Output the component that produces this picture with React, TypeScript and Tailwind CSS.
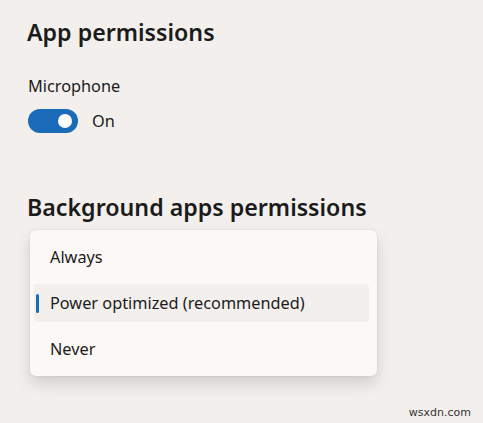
import React from "react";

export default function App() {
  return (
    <div
      className="relative w-[483px] h-[423px] overflow-hidden bg-[#f3efed] text-[#1b1b1b]"
      style={{ fontFamily: '"Noto Sans", "Open Sans", sans-serif' }}
    >
      <div className="flex flex-col pl-[27px] pt-[16px]">
        <h1 className="text-[23.2px] leading-[32px] font-semibold">App permissions</h1>
        <div className="mt-[27px] text-[16.3px] leading-[22px] pl-[1px]">Microphone</div>
        <div className="mt-[12px] flex items-center gap-[14px] pl-[1px]">
          <div className="w-[50px] h-[24px] rounded-full bg-[#1a6bb8] flex items-center justify-end pr-[6px]">
            <div className="w-[14px] h-[14px] rounded-full bg-white" />
          </div>
          <span className="text-[16.3px] leading-[22px]">On</span>
        </div>
        <h2 className="mt-[58px] text-[23.2px] leading-[32px] font-semibold">Background apps permissions</h2>
      </div>

      <div className="absolute left-[30px] top-[230px] w-[347px] rounded-[6px] bg-[#fbf8f6] py-[4px] pl-[4px] pr-[8px] shadow-[0_8px_16px_rgba(0,0,0,0.14),0_0_2px_rgba(0,0,0,0.12)] text-[16.3px]">
        <div className="h-[46px] flex items-center pl-[16px]">Always</div>
        <div className="h-[46px] flex items-center">
          <div className="relative w-full h-[38px] rounded-[4px] bg-[#f3efed] flex items-center pl-[16px]">
            <div className="absolute left-[2px] top-[10px] w-[3px] h-[19px] rounded-full bg-[#1a6bb8]" />
            Power optimized (recommended)
          </div>
        </div>
        <div className="h-[46px] flex items-center pl-[16px]">Never</div>
      </div>

      <div
        className="absolute right-[12px] bottom-[2px] text-[11px] text-[#333]"
        style={{ fontFamily: '"DejaVu Sans", sans-serif' }}
      >
        wsxdn.com
      </div>
    </div>
  );
}
